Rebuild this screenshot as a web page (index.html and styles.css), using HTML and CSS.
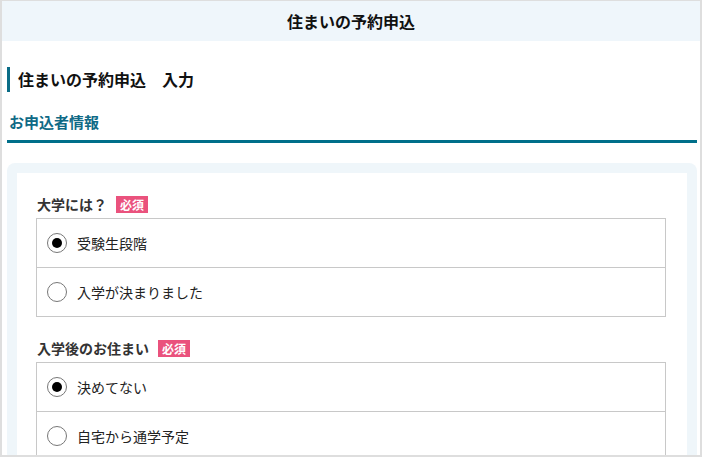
FILE: index.html
```html
<!DOCTYPE html>
<html lang="ja">
<head>
    <meta charset="UTF-8">
    <meta name="viewport" content="width=device-width, initial-scale=1.0">
    <title>住まいの予約申込</title>
    <link rel="stylesheet" href="styles.css">
</head>
<body>
    <div class="page">
        <header class="topbar">住まいの予約申込</header>
        <main class="content">
            <h1 class="page-title">住まいの予約申込　入力</h1>
            <h2 class="section-title">お申込者情報</h2>
            <div class="panel">
                <div class="panel-inner">
                    <div class="field">
                        <div class="field-label">大学には？<span class="required">必須</span></div>
                        <div class="options">
                            <label class="option"><span class="radio checked"></span>受験生段階</label>
                            <label class="option"><span class="radio"></span>入学が決まりました</label>
                        </div>
                    </div>
                    <div class="field">
                        <div class="field-label">入学後のお住まい<span class="required">必須</span></div>
                        <div class="options">
                            <label class="option"><span class="radio checked"></span>決めてない</label>
                            <label class="option"><span class="radio"></span>自宅から通学予定</label>
                        </div>
                    </div>
                </div>
            </div>
        </main>
    </div>
</body>
</html>
```

FILE: styles.css
```css
body {
    margin: 0;
    padding: 0;
    font-family: "Noto Sans CJK JP", "Noto Sans", sans-serif;
    color: #222;
    background: #fff;
}
.page {
    box-sizing: border-box;
    height: 457px;
    overflow: hidden;
    border: 1px solid #dedede;
    border-left-width: 2px;
    border-right-width: 2px;
    border-bottom-width: 2px;
}
.topbar {
    height: 40px;
    line-height: 40px;
    text-align: center;
    background: #eff6fb;
    font-size: 16px;
    font-weight: 700;
    color: #111;
}
.content {
    padding: 0 3px 0 5px;
}
.page-title {
    margin: 26px 0 0;
    height: 25px;
    line-height: 25px;
    border-left: 3px solid #0a6c86;
    padding-left: 8px;
    font-size: 16px;
    font-weight: 700;
    color: #111;
}
.section-title {
    margin: 19px 0 0;
    padding: 0 0 7px 2px;
    line-height: 22px;
    font-size: 15px;
    font-weight: 700;
    color: #0f6a86;
    border-bottom: 3px solid #006f8a;
}
.panel {
    margin-top: 20px;
    background: #eff6fa;
    border-radius: 8px;
    padding: 10px 10px 0;
}
.panel-inner {
    background: #fff;
    padding: 1px 21px 0 19px;
}
.field {
    margin-top: 20px;
}
.field + .field {
    margin-top: 21px;
}
.field-label {
    display: flex;
    align-items: center;
    height: 20px;
    padding-left: 1px;
    margin-bottom: 4px;
    font-size: 14px;
    font-weight: 700;
    color: #333;
}
.required {
    margin-left: 9px;
    padding: 0 4px;
    line-height: 17px;
    font-size: 12px;
    font-weight: 700;
    color: #fff;
    background: #ea527d;
}
.options {
    border: 1px solid #c8c8c8;
}
.option {
    display: flex;
    align-items: center;
    gap: 10px;
    height: 48px;
    padding-left: 10px;
    font-size: 14px;
    color: #222;
}
.option + .option {
    border-top: 1px solid #c8c8c8;
}
.radio {
    box-sizing: border-box;
    width: 20px;
    height: 20px;
    border: 1.5px solid #777;
    border-radius: 50%;
    display: flex;
    align-items: center;
    justify-content: center;
}
.radio.checked::after {
    content: "";
    width: 10px;
    height: 10px;
    border-radius: 50%;
    background: #000;
}
```
